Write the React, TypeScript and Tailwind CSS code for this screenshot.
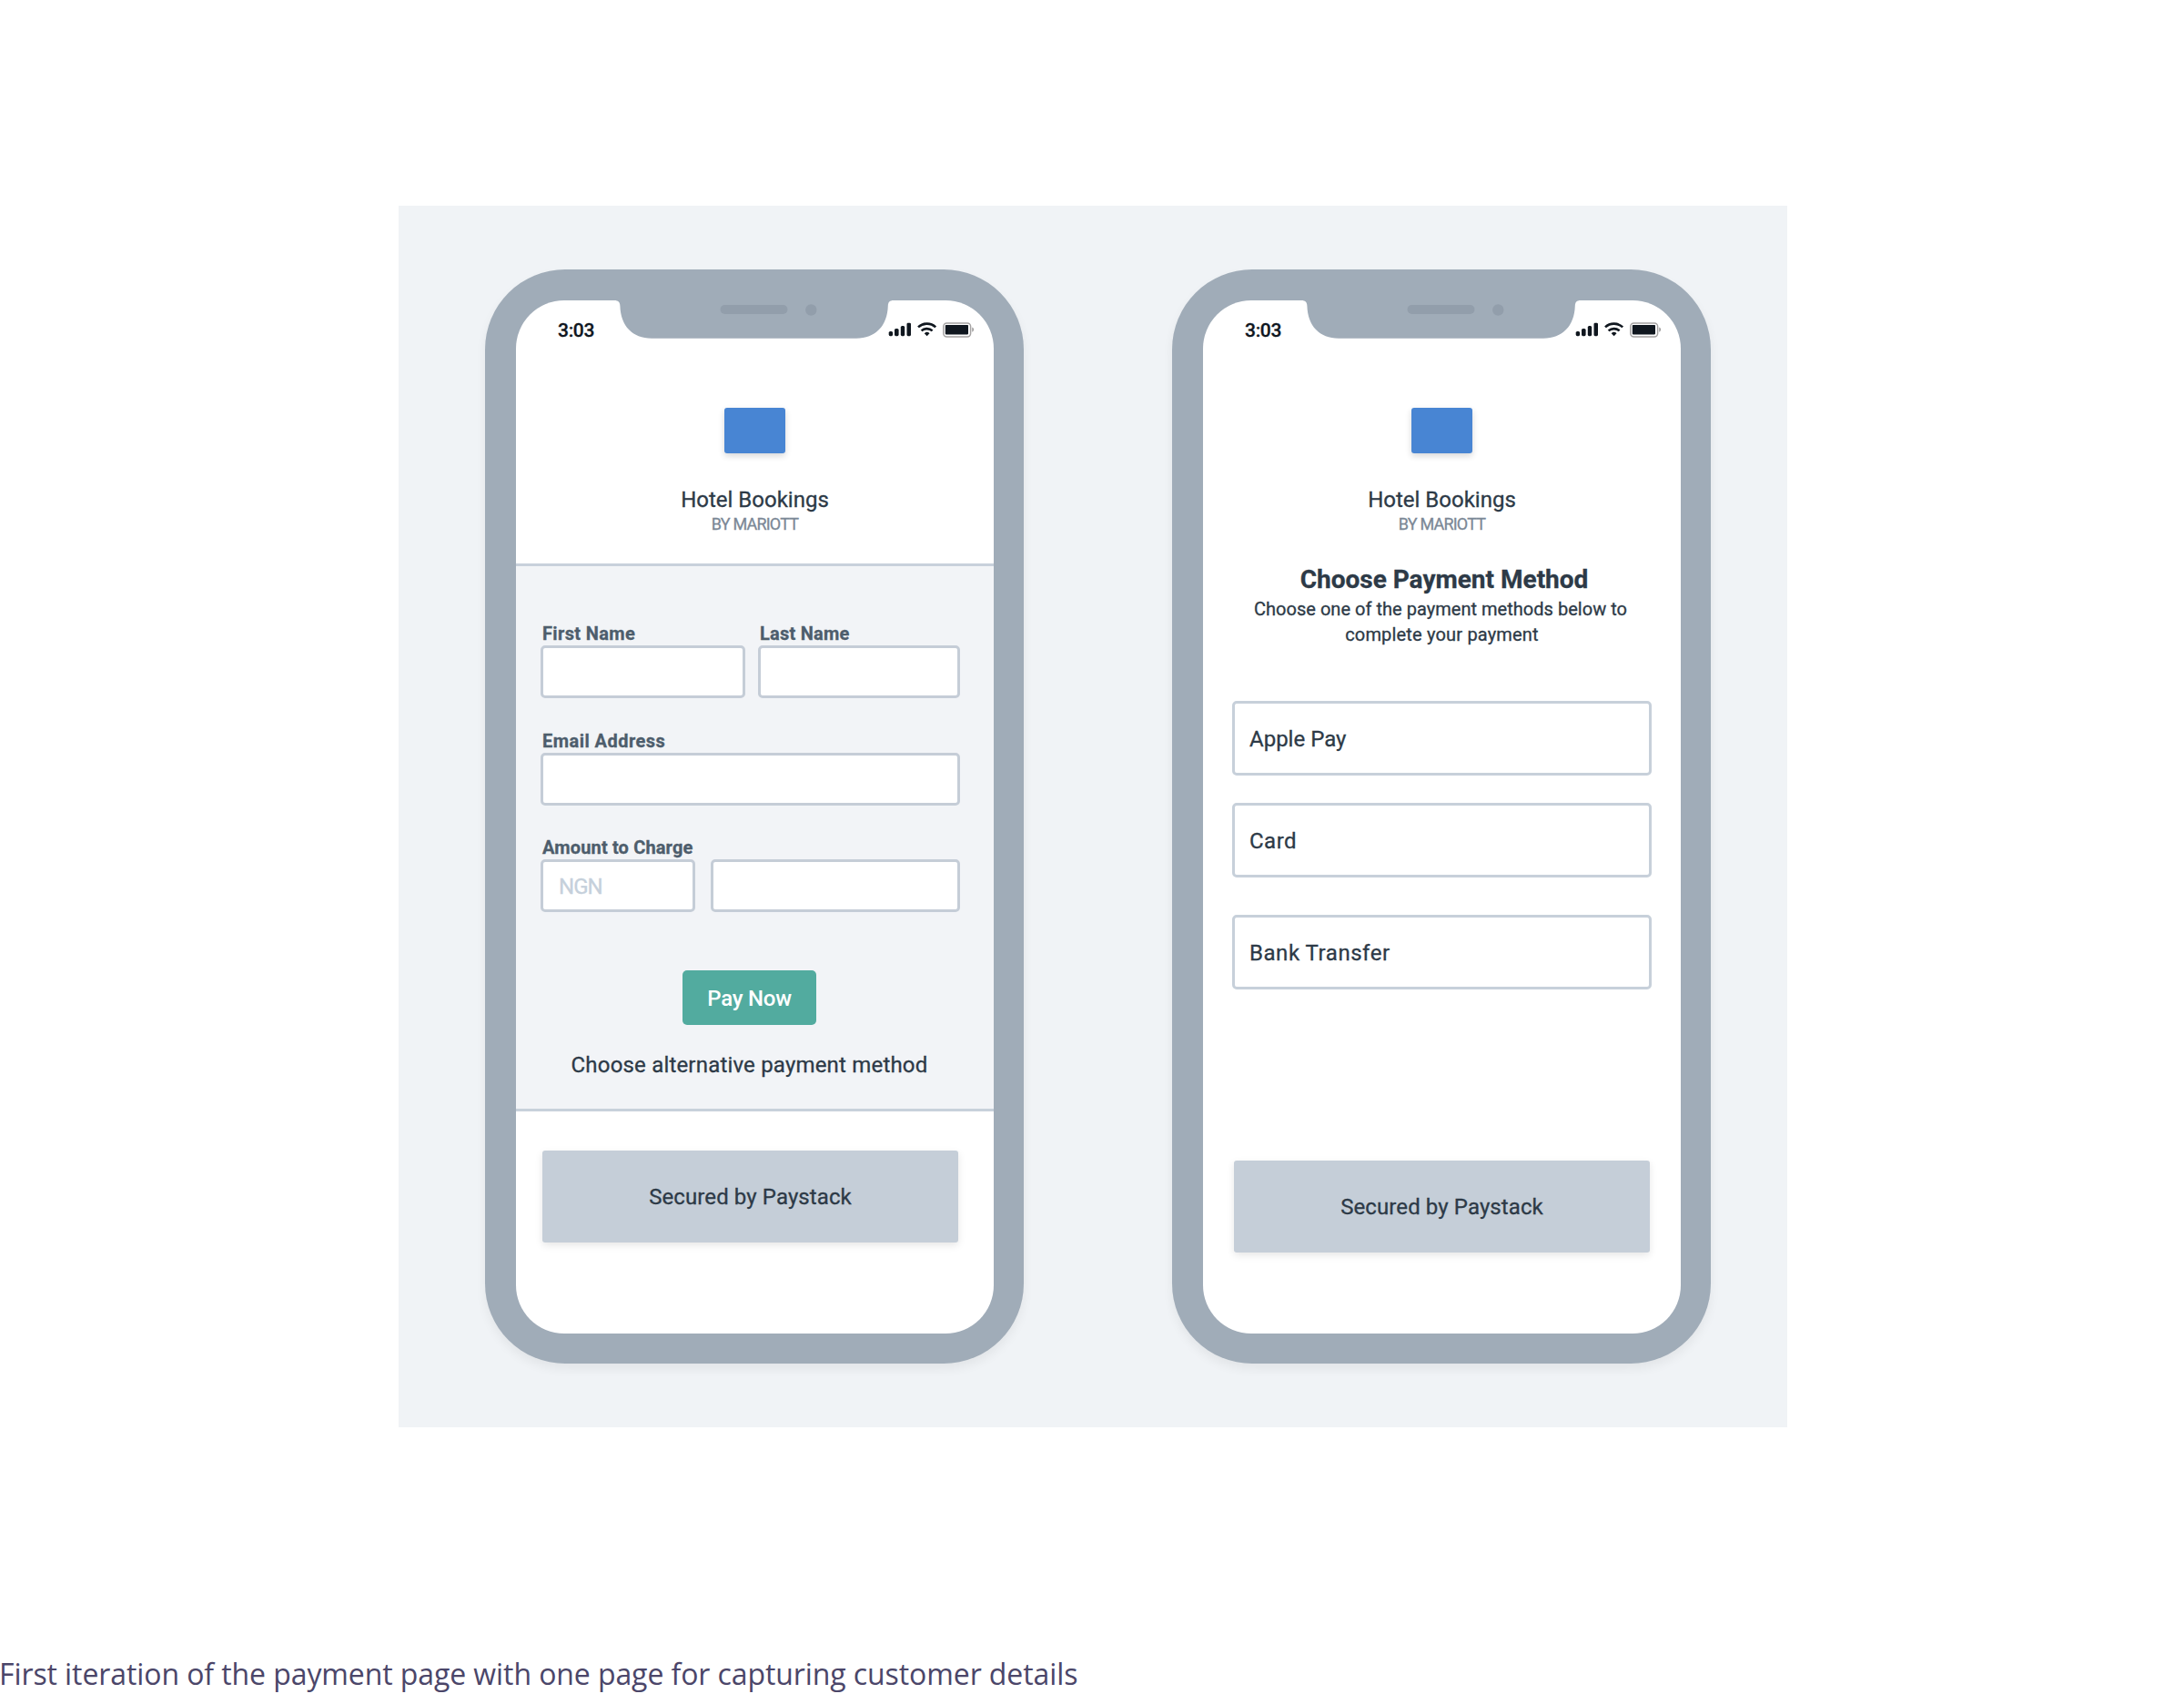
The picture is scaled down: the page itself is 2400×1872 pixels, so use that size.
import type { ReactNode } from 'react';

function Notch() {
  return (
    <div className="absolute top-0 left-[108px]">
      <svg width="308" height="42" viewBox="0 0 308 42" className="block">
        <path
          d="M0 -1 V0 C4.5 0 6.2 2 6.4 6 C7 28 20 41.7 41 41.7 H266 C287 41.7 300.2 28 300.8 6 C301 2 302.5 0 307 0 V-1 Z"
          fill="#a0acb8"
        />
        <rect x="116.5" y="5" width="74" height="10" rx="5" fill="#929eab" />
        <circle cx="216.3" cy="10.5" r="6.2" fill="#929eab" />
      </svg>
    </div>
  );
}

function StatusIcons() {
  return (
    <svg width="95" height="18" viewBox="0 0 95 18" className="block">
      <g fill="#10171f">
        <rect x="0.7" y="10" width="4.4" height="5.2" rx="1.6" />
        <rect x="7" y="7" width="4.6" height="8.2" rx="1.6" />
        <rect x="13.8" y="4" width="4.4" height="11.2" rx="1.6" />
        <rect x="20.5" y="0.7" width="4.5" height="14.5" rx="1.4" />
        <path d="M42.6 15.2 L39.7 12.2 A4.2 4.2 0 0 1 45.5 12.2 Z" />
        <rect x="62.8" y="3" width="25.2" height="10.4" rx="0.8" />
      </g>
      <g fill="none" stroke="#10171f" strokeWidth="2.6">
        <path d="M33 5.4 A14 14 0 0 1 52.2 5.4" />
        <path d="M36.6 9.4 A9 9 0 0 1 48.6 9.4" />
      </g>
      <rect x="60.8" y="0.9" width="29.8" height="15" rx="3.6" fill="none" stroke="#a5a3a3" strokeWidth="1.5" />
      <path d="M92.2 5.6 C94.8 6.6 94.8 9.8 92.2 10.8 Z" fill="#a5a3a3" />
    </svg>
  );
}

function Phone({ children }: { children: ReactNode }) {
  return (
    <div className="h-[1202px] w-[592px] rounded-[88px] bg-[#a0acb8] pt-[34px] pr-[33px] pb-[33px] pl-[34px] shadow-[0_6px_12px_rgba(0,0,0,0.06)]">
      <div className="relative flex h-full flex-col items-center overflow-hidden rounded-[53px] bg-white text-[#2d3a47] [-webkit-text-stroke:0.3px]">
        <Notch />
        <div className="flex h-[118px] w-full justify-between pt-6 pr-[21px] pl-[46px]">
          <span className="-mt-px h-5 text-[21px] leading-5 font-medium tracking-[-0.3px] text-[#10171f]">3:03</span>
          <StatusIcons />
        </div>
        <div className="h-[50px] w-[67px] shrink-0 rounded-[3px] bg-[#4885d3] shadow-[0_3px_7px_rgba(0,0,0,0.16)]" />
        <h2 className="mt-9 text-2xl leading-[30px]">Hotel Bookings</h2>
        <p className="text-lg leading-6 tracking-[-0.79px] text-[#7b8896]">BY MARIOTT</p>
        {children}
      </div>
    </div>
  );
}

function Label({ children, className }: { children: ReactNode; className: string }) {
  return <div className={`mb-0.5 pl-0.5 text-xl leading-[22px] font-bold whitespace-nowrap text-[#4d5d6c] ${className}`}>{children}</div>;
}

function Field({ className = '', children }: { className?: string; children?: ReactNode }) {
  return (
    <div className={`flex h-[58px] items-center rounded-[5px] border-[3px] border-[#c5cdd7] bg-white pt-0.5 pl-[17px] text-2xl tracking-[-0.98px] text-[#c5d0db] ${className}`}>
      {children}
    </div>
  );
}

function Option({ className, children }: { className: string; children: ReactNode }) {
  return (
    <div className={`flex h-[82px] w-[461px] shrink-0 items-center rounded-[5px] border-[3px] border-[#c7d0da] pt-0.5 pl-4 text-2xl ${className}`}>
      {children}
    </div>
  );
}

function Secured({ className }: { className: string }) {
  return (
    <div className={`flex h-[101px] w-[457px] shrink-0 items-center justify-center rounded-[3px] bg-[#c5ced8] pt-px text-2xl tracking-[0.1px] shadow-[0_3px_8px_rgba(0,0,0,0.1)] ${className}`}>
      Secured by Paystack
    </div>
  );
}

function DetailsScreen() {
  return (
    <>
      <div className="mt-[31px] h-[602px] w-full shrink-0 border-y-[3px] border-[#c8d1db] bg-[#f2f4f7] pl-[27px]">
        <div className="flex w-[461px] flex-col pt-[63px]">
          <div className="flex gap-3.5">
            <div>
              <Label className="tracking-[0.36px]">First Name</Label>
              <Field className="w-[225px]" />
            </div>
            <div>
              <Label className="tracking-[0.23px]">Last Name</Label>
              <Field className="w-[222px]" />
            </div>
          </div>
          <div className="mt-9">
            <Label className="tracking-[0.46px]">Email Address</Label>
            <Field className="w-[461px]" />
          </div>
          <div className="mt-[35px]">
            <Label className="tracking-[0.15px]">Amount to Charge</Label>
            <div className="flex justify-between">
              <Field className="w-[170px]">NGN</Field>
              <Field className="w-[274px]" />
            </div>
          </div>
          <div className="flex w-[459px] flex-col items-center">
            <button className="mt-16 h-[60px] w-[147px] rounded-[5px] bg-[#52ab9f] pt-px text-2xl font-medium tracking-[-0.22px] text-white [-webkit-text-stroke:0px]">
              Pay Now
            </button>
            <p className="mt-[29px] text-2xl leading-[30px] tracking-[0.19px]">Choose alternative payment method</p>
          </div>
        </div>
      </div>
      <Secured className="mt-[43px] mr-[10px]" />
    </>
  );
}

function MethodScreen() {
  return (
    <>
      <h1 className="mt-[31px] ml-[5px] text-[28px] leading-9 font-bold">Choose Payment Method</h1>
      <p className="text-center text-xl leading-7 tracking-[0.03px]">
        <span className="mr-[3px] block">Choose one of the payment methods below to</span>
        <span className="block tracking-[0.18px]">complete your payment</span>
      </p>
      <Option className="mt-[59px]">Apple Pay</Option>
      <Option className="mt-[30px] tracking-[0.5px]">Card</Option>
      <Option className="mt-[41px] tracking-[0.54px]">Bank Transfer</Option>
      <Secured className="mt-[188px]" />
    </>
  );
}

export default function App() {
  return (
    <main className="flex h-[1872px] w-[2400px] flex-col overflow-hidden bg-white pt-[226px] font-['Roboto',sans-serif]">
      <section className="ml-[438px] flex h-[1342px] w-[1526px] shrink-0 gap-[163px] bg-[#f0f3f6] pt-[70px] pl-[95px]">
        <Phone>
          <DetailsScreen />
        </Phone>
        <Phone>
          <MethodScreen />
        </Phone>
      </section>
      <p className="mt-[249px] -ml-px font-['Open_Sans',sans-serif] text-[32px] leading-[44px] tracking-[-0.09px] whitespace-nowrap text-[#4b4669]">
        First iteration of the payment page with one page for capturing customer details
      </p>
    </main>
  );
}
